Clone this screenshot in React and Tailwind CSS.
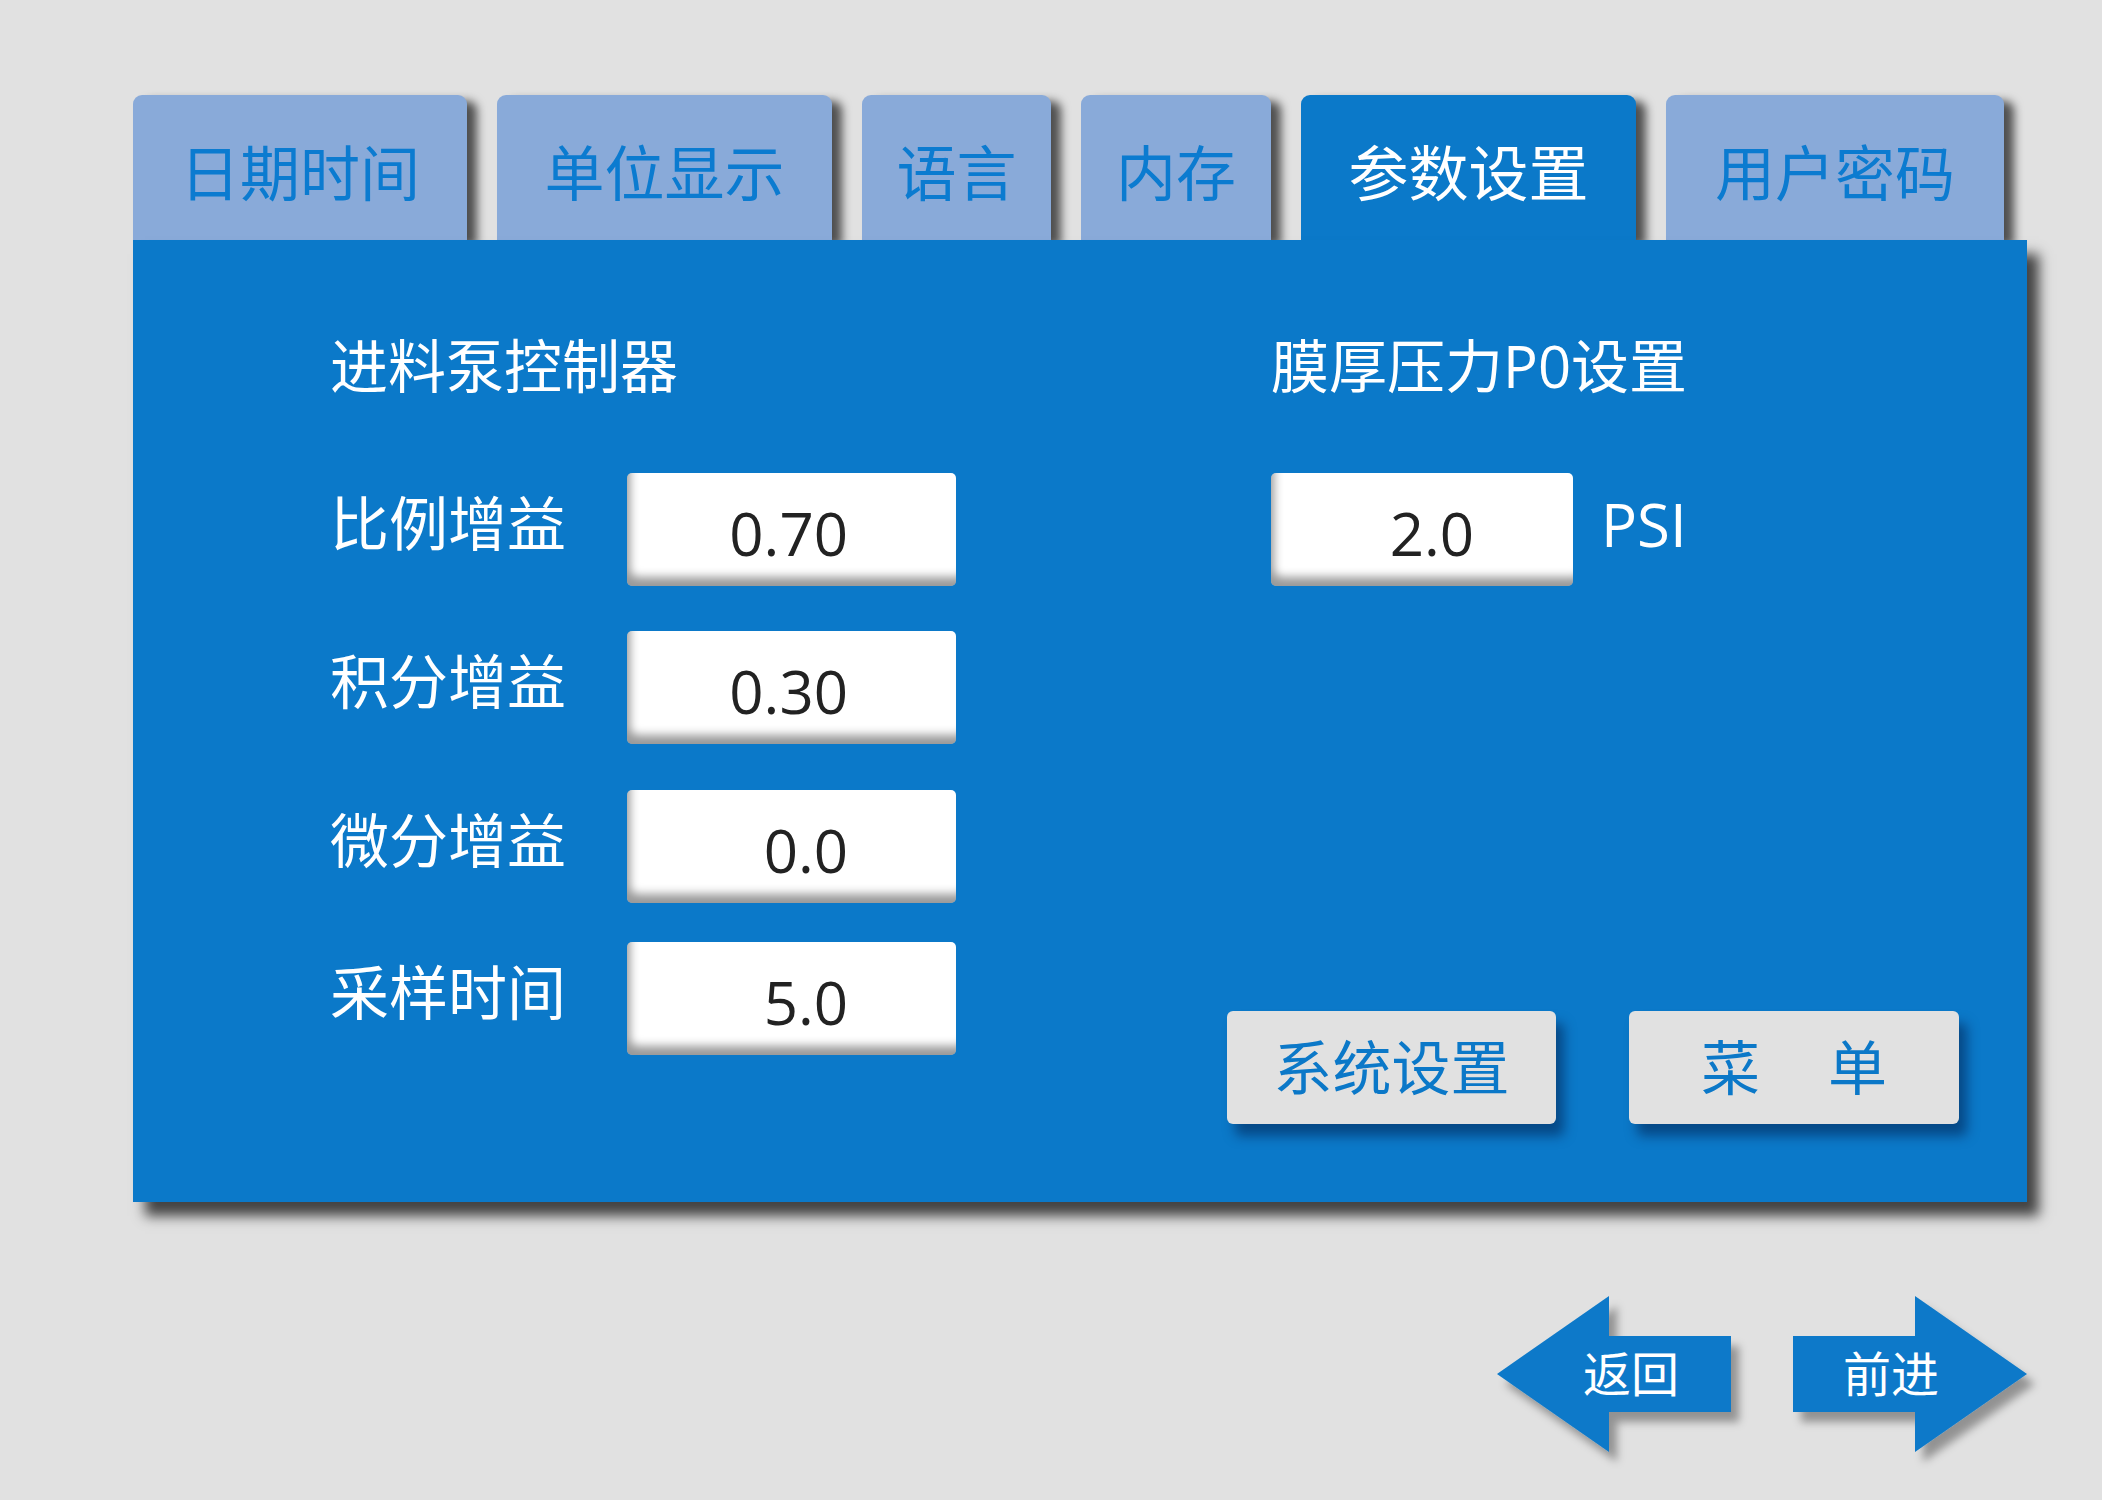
const FONT = "font-['Open_Sans','Noto_Sans_CJK_SC',sans-serif]";

const tabs = [
  { label: '日期时间', w: 'w-[334px]' },
  { label: '单位显示', w: 'w-[335px]' },
  { label: '语言', w: 'w-[189px]' },
  { label: '内存', w: 'w-[190px]' },
  { label: '参数设置', w: 'w-[335px]', active: true },
  { label: '用户密码', w: 'w-[338px]' },
];

const rows = [
  { label: '比例增益', value: '0.70', mt: 'mt-[72px]' },
  { label: '积分增益', value: '0.30', mt: 'mt-[45px]' },
  { label: '微分增益', value: '0.0', mt: 'mt-[46px]' },
  { label: '采样时间', value: '5.0', mt: 'mt-[39px]' },
];

function ValueBox({ value, className }) {
  return (
    <div
      className={`h-[113px] rounded-[5px] bg-white flex items-center justify-end pt-[6px] text-[60px] leading-none text-[#222] shadow-[inset_6px_-12px_10px_-3px_rgba(0,0,0,0.4)] ${className}`}
    >
      {value}
    </div>
  );
}

function Arrow({ dir, label }) {
  const points =
    dir === 'left'
      ? '0,78 112,0 112,40 234,40 234,116 112,116 112,156'
      : '0,40 122,40 122,0 234,78 122,156 122,116 0,116';
  return (
    <div className="relative w-[234px] h-[156px]">
      <svg width="234" height="156" viewBox="0 0 234 156" className="absolute inset-0 overflow-visible">
        <defs>
          <filter id={`sh-${dir}`} x="-20%" y="-20%" width="150%" height="150%">
            <feDropShadow dx="8" dy="10" stdDeviation="4" floodColor="#000" floodOpacity="0.35" />
          </filter>
        </defs>
        <polygon points={points} fill="#0b79c9" filter={`url(#sh-${dir})`} />
      </svg>
      <span
        className={`absolute top-0 h-[156px] flex items-center text-[48px] leading-none text-white ${
          dir === 'left' ? 'left-[86px]' : 'left-[50px]'
        }`}
      >
        {label}
      </span>
    </div>
  );
}

export default function App() {
  return (
    <div className={`h-[1500px] w-full bg-[#e1e1e1] pt-[95px] pl-[133px] ${FONT}`}>
      {/* Tabs */}
      <div className="flex items-end gap-[30px] h-[145px]">
        {tabs.map((t) => (
          <div
            key={t.label}
            className={`${t.w} h-[145px] rounded-t-[9px] flex items-center justify-center pt-[10px] text-[60px] leading-none shadow-[10px_6px_10px_rgba(0,0,0,0.65)] ${
              t.active ? 'bg-[#0b79c9] text-white' : 'bg-[#89aad9] text-[#0b7bd0]'
            }`}
          >
            {t.label}
          </div>
        ))}
      </div>

      {/* Panel */}
      <div className="relative flex w-[1894px] h-[962px] bg-[#0b79c9] pt-[91px] pb-[78px] pl-[197px] shadow-[12px_14px_12px_rgba(0,0,0,0.7)]">
        <div className="w-[897px] flex flex-col">
          <div className="h-[70px] leading-[70px] text-[58px] text-white">进料泵控制器</div>
          {rows.map((r) => (
            <div key={r.label} className={`flex items-center ${r.mt}`}>
              <div className="w-[297px] pb-[12px] text-[59px] leading-none text-white">{r.label}</div>
              <ValueBox value={r.value} className="w-[329px] pr-[108px]" />
            </div>
          ))}
        </div>

        <div className="flex-1 flex flex-col">
          <div className="pl-[44px] h-[70px] leading-[70px] text-[58px] text-white">膜厚压力P0设置</div>
          <div className="pl-[44px] mt-[72px] flex items-center">
            <ValueBox value="2.0" className="w-[302px] pr-[99px]" />
            <span className="ml-[28px] pb-[12px] text-[60px] leading-none text-white">PSI</span>
          </div>
          <div className="mt-auto flex gap-[73px]">
            <div className="w-[329px] h-[113px] rounded-[6px] bg-[#e1e1e1] flex items-center justify-center text-[59px] leading-none text-[#0b78c8] shadow-[8px_12px_12px_rgba(0,25,70,0.5)]">
              系统设置
            </div>
            <div className="w-[330px] h-[113px] rounded-[6px] bg-[#e1e1e1] flex items-center justify-center gap-[68px] text-[59px] leading-none text-[#0b78c8] shadow-[8px_12px_12px_rgba(0,25,70,0.5)]">
              <span>菜</span>
              <span>单</span>
            </div>
          </div>
        </div>
      </div>

      {/* Navigation arrows */}
      <div className="flex justify-end gap-[62px] pr-[75px] mt-[94px]">
        <Arrow dir="left" label="返回" />
        <Arrow dir="right" label="前进" />
      </div>
    </div>
  );
}
